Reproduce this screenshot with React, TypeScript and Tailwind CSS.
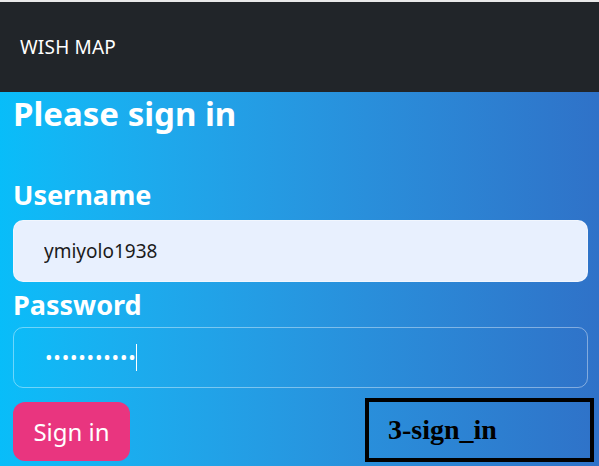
export default function App() {
  return (
    <div className="w-[599px] h-[466px] overflow-hidden bg-[#e9e9e9] font-['Segoe_UI','Noto_Sans',sans-serif]">
      <div className="h-[2px]" />

      {/* navbar */}
      <nav className="h-[90px] bg-[#212529] flex items-center px-5">
        <span className="text-white text-[19px] tracking-[0.2px]">WISH MAP</span>
      </nav>

      {/* sign-in form */}
      <main className="h-[374px] bg-gradient-to-r from-[#08bdf9] to-[#2f72c8] pl-[13px] pr-[11px]">
        <h1 className="text-white font-bold text-[33px] leading-none pt-[5px]">Please sign in</h1>

        <label className="block text-white font-bold text-[27px] leading-none mt-[51px]">Username</label>
        <input
          className="mt-[12px] w-full h-[62px] rounded-[10px] bg-[#e8f0fe] border border-white/40 pl-[30px] text-[19px] text-[#1b1b1b] outline-none"
          defaultValue="ymiyolo1938"
        />

        <label className="block text-white font-bold text-[27px] leading-none mt-[9px]">Password</label>
        <div className="mt-[9px] w-full h-[61px] rounded-[10px] border border-white/40 pl-[31px] flex items-center">
          <span className="text-white text-[20px] tracking-[0.8px] leading-none">•••••••••••</span>
          <span className="w-px h-[27px] bg-white -ml-[1px]" />
        </div>

        <div className="flex items-start justify-between mt-[14px]">
          <button className="w-[117px] h-[59px] rounded-[12px] bg-[#e9357f] text-white text-[24px]">Sign in</button>
          <div className="w-[229px] h-[64px] -mt-[4px] border-[4px] border-black flex items-center pl-[19px] -mr-[6px]">
            <span className="font-['Liberation_Serif',serif] font-bold text-[28px] text-black">3-sign_in</span>
          </div>
        </div>
      </main>
    </div>
  );
}
